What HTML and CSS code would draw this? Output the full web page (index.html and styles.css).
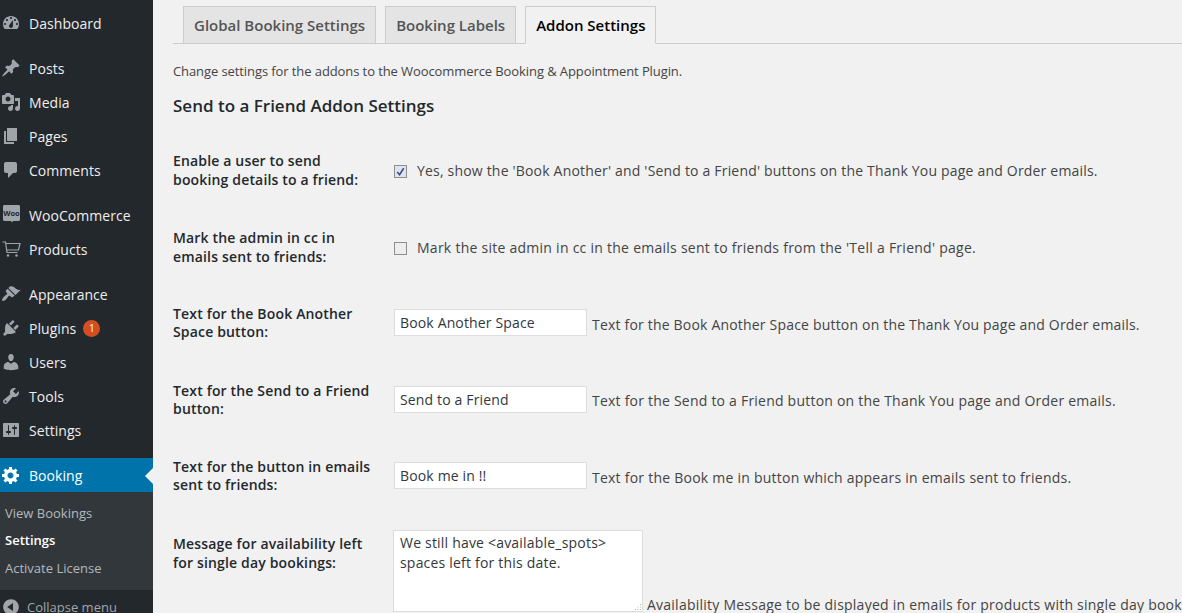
FILE: index.html
```html
<!DOCTYPE html>
<html lang="en">
<head>
<meta charset="utf-8">
<title>Addon Settings</title>
<link rel="stylesheet" href="styles.css">
</head>
<body>
<div class="page">
<nav class="sidebar">
  <ul class="menu">
    <li class="item"><svg class="ico" viewBox="0 0 20 20"><path fill-rule="evenodd" d="M3.76 16h12.48c1.1-1.37 1.76-3.11 1.76-5 0-4.42-3.58-8-8-8s-8 3.58-8 8c0 1.89.66 3.63 1.76 5zM10 4c.55 0 1 .45 1 1s-.45 1-1 1-1-.45-1-1 .45-1 1-1zM6 6c.55 0 1 .45 1 1s-.45 1-1 1-1-.45-1-1 .45-1 1-1zm8 0c.55 0 1 .45 1 1s-.45 1-1 1-1-.45-1-1 .45-1 1-1zm-5.37 5.55L12 7v6c0 1.1-.9 2-2 2s-2-.9-2-2c0-.57.24-1.08.63-1.45zM4 10c.55 0 1 .45 1 1s-.45 1-1 1-1-.45-1-1 .45-1 1-1zm12 0c.55 0 1 .45 1 1s-.45 1-1 1-1-.45-1-1 .45-1 1-1z"/></svg>Dashboard</li>
    <li class="item sep"><svg class="ico" viewBox="0 0 20 20"><path d="M10.44 3.02l1.82-1.82 6.36 6.35-1.83 1.82c-1.05-.68-2.48-.57-3.41.36l-.75.75c-.92.93-1.04 2.35-.35 3.41l-1.83 1.82-2.41-2.41-2.8 2.79c-.42.42-3.38 2.71-3.8 2.29s1.86-3.39 2.28-3.81l2.79-2.79L4.1 9.36l1.83-1.82c1.05.69 2.48.57 3.4-.36l.75-.75c.93-.92 1.05-2.35.36-3.41z"/></svg>Posts</li>
    <li class="item"><svg class="ico" viewBox="0 0 20 20"><path fill-rule="evenodd" d="M13 11V4c0-.55-.45-1-1-1h-1.67L9 1H5L3.67 3H2c-.55 0-1 .45-1 1v7c0 .55.45 1 1 1h10c.55 0 1-.45 1-1zM7 4.5c1.38 0 2.5 1.12 2.5 2.5S8.38 9.5 7 9.5 4.5 8.38 4.5 7 5.62 4.5 7 4.5zM14 6h5v10.5c0 1.38-1.12 2.5-2.5 2.5S14 17.88 14 16.5s1.12-2.5 2.5-2.5c.17 0 .34.02.5.05V9h-3V6zm-4 8.05V13h2v3.5c0 1.38-1.12 2.5-2.5 2.5S7 17.88 7 16.5 8.12 14 9.5 14c.17 0 .34.02.5.05z"/></svg>Media</li>
    <li class="item"><svg class="ico" viewBox="0 0 20 20"><path d="M6 15V2h10v13H6zm-1 1h8v2H3V5h2v11z"/></svg>Pages</li>
    <li class="item"><svg class="ico" viewBox="0 0 20 20"><path d="M5 2h9c1.1 0 2 .9 2 2v7c0 1.1-.9 2-2 2h-2l-5 5v-5H5c-1.1 0-2-.9-2-2V4c0-1.1.9-2 2-2z"/></svg>Comments</li>
    <li class="item sep"><svg class="ico" viewBox="0 0 20 20"><path d="M3.500 0h14c.9 0 1.500.7 1.500 1.500v13c0 .8-.6 1.500-1.500 1.500H12l-1 1.500L10 16H3.500C2.600 16 2 15.300 2 14.500v-13C2 .7 2.600 0 3.500 0z"/><text class="woo" x="10.500" y="10.500">Woo</text></svg>WooCommerce</li>
    <li class="item"><svg class="ico cart" viewBox="0 0 20 20"><path d="M1.500 3h3l1.500 10.500h10.500M5 4.500h14l-1.500 6.500H6"/><circle cx="7" cy="16.500" r="1.200"/><circle cx="15.500" cy="16.500" r="1.200"/></svg>Products</li>
    <li class="item sep"><svg class="ico" viewBox="0 0 20 20"><path d="M14.48 11.06L7.41 3.99l1.5-1.5c.5-.56 2.3-.47 3.51.32 1.21.8 1.43 1.28 2.91 2.1 1.18.64 2.45 1.26 4.45.85zm-.71.71L6.7 4.7 4.93 6.47c-.39.39-.39 1.02 0 1.41l1.06 1.06c.39.39.39 1.03 0 1.42-.6.6-1.43 1.11-2.21 1.69-.35.26-.7.53-1.01.84-1.43 1.43-2.06 3.1-1.4 3.75.65.66 2.32.03 3.75-1.4.31-.31.58-.66.84-1.01.58-.78 1.09-1.61 1.69-2.21.39-.39 1.03-.39 1.42 0l1.06 1.06c.39.39 1.02.39 1.41 0z"/></svg>Appearance</li>
    <li class="item"><svg class="ico" viewBox="0 0 20 20"><path d="M13.11 4.360L9.870 7.600 8 5.730l3.240-3.240c.35-.34 1.050-.2 1.560.32.52.51.66 1.210.31 1.550zm-8 1.770l.91-1.120 9.010 9.010-1.190.84c-.71.71-2.630 1.160-3.820 1.160H6.140L4.900 17.260c-.59.59-1.540.59-2.120 0-.59-.58-.59-1.530 0-2.120l1.240-1.240v-3.880c0-1.130.4-3.190 1.090-3.890zm7.260 3.970l3.240-3.240c.34-.35 1.040-.21 1.550.31.52.51.66 1.210.31 1.550l-3.240 3.250z"/></svg>Plugins<span class="badge">1</span></li>
    <li class="item"><svg class="ico" viewBox="0 0 20 20"><path d="M10 9.250c-2.270 0-2.730-3.440-2.730-3.440C7 4.020 7.820 2 9.970 2c2.160 0 2.980 2.020 2.710 3.810 0 0-.41 3.440-2.680 3.440zm0 2.570L12.720 10c2.390 0 4.520 2.330 4.520 4.530v2.490s-3.650 1.130-7.240 1.130c-3.650 0-7.240-1.130-7.240-1.130v-2.490c0-2.250 1.940-4.480 4.470-4.480z"/></svg>Users</li>
    <li class="item"><svg class="ico" viewBox="0 0 20 20"><path fill-rule="evenodd" d="M16.680 9.770c-1.340 1.340-3.300 1.670-4.950.99l-5.410 6.520c-.99.99-2.590.99-3.580 0s-.99-2.590 0-3.570l6.520-5.420c-.68-1.650-.35-3.610.99-4.950 1.280-1.280 3.120-1.620 4.720-1.060l-2.890 2.890 2.820 2.820 2.860-2.870c.53 1.580.18 3.390-1.080 4.650zM3.810 16.210c.4.39 1.040.39 1.430 0 .4-.4.4-1.040 0-1.430-.39-.4-1.030-.4-1.430 0-.39.39-.39 1.030 0 1.430z"/></svg>Tools</li>
    <li class="item"><svg class="ico" viewBox="0 0 20 20"><path fill-rule="evenodd" d="M18 16V4c0-.55-.45-1-1-1H3c-.55 0-1 .45-1 1v12c0 .55.45 1 1 1h14c.55 0 1-.45 1-1zM8 11h1c.55 0 1 .45 1 1s-.45 1-1 1H8v1.500c0 .28-.22.5-.5.5s-.5-.22-.5-.5V13H6c-.55 0-1-.45-1-1s.45-1 1-1h1V5.500c0-.28.22-.5.5-.5s.5.22.5.5V11zm5-2h-1c-.55 0-1-.45-1-1s.45-1 1-1h1V5.500c0-.28.22-.5.5-.5s.5.22.5.5V7h1c.55 0 1 .45 1 1s-.45 1-1 1h-1v5.500c0 .28-.22.5-.5.5s-.5-.22-.5-.5V9z"/></svg>Settings</li>
    <li class="item sep current"><svg class="ico" viewBox="0 0 20 20"><path fill-rule="evenodd" d="M18 12h-2.180c-.17.7-.44 1.350-.81 1.930l1.540 1.540-2.100 2.100-1.540-1.540c-.58.36-1.230.63-1.910.79V19H8v-2.180c-.68-.16-1.330-.43-1.910-.79l-1.540 1.540-2.120-2.120 1.540-1.540c-.36-.58-.63-1.230-.79-1.910H1V9.030h2.170c.16-.7.44-1.350.8-1.940L2.430 5.550l2.100-2.100 1.540 1.540c.58-.37 1.240-.64 1.930-.81V2h3v2.180c.68.16 1.330.43 1.910.79l1.540-1.540 2.120 2.120-1.540 1.540c.36.59.64 1.240.8 1.940H18V12zm-8.500 1.500c1.660 0 3-1.340 3-3s-1.340-3-3-3-3 1.340-3 3 1.340 3 3 3z"/></svg>Booking</li>
  </ul>
  <ul class="submenu">
    <li>View Bookings</li>
    <li class="active">Settings</li>
    <li>Activate License</li>
  </ul>
  <div class="collapse"><svg class="ico" viewBox="0 0 20 20"><path fill-rule="evenodd" d="M10 2.160c4.330 0 7.840 3.510 7.840 7.840s-3.510 7.840-7.840 7.840S2.160 14.330 2.160 10 5.710 2.160 10 2.160zm2 11.720V6.120L6.180 9.970z"/></svg>Collapse menu</div>
</nav>
<main class="content">
  <div class="tabs">
    <a class="tab">Global Booking Settings</a>
    <a class="tab">Booking Labels</a>
    <a class="tab on">Addon Settings</a>
  </div>
  <p class="intro">Change settings for the addons to the Woocommerce Booking &amp; Appointment Plugin.</p>
  <h2 class="title">Send to a Friend Addon Settings</h2>
  <div class="rows">
    <div class="row gap17 checkrow">
      <label class="lbl">Enable a user to send booking details to a friend:</label>
      <div class="field"><span class="check on"><svg viewBox="0 0 12 12"><path d="M2.500 6.500l2.500 3 4.500-7"/></svg></span><span class="desc">Yes, show the 'Book Another' and 'Send to a Friend' buttons on the Thank You page and Order emails.</span></div>
    </div>
    <div class="row gap14 checkrow">
      <label class="lbl">Mark the admin in cc in emails sent to friends:</label>
      <div class="field"><span class="check"></span><span class="desc wide">Mark the site admin in cc in the emails sent to friends from the 'Tell a Friend' page.</span></div>
    </div>
    <div class="row gap17">
      <label class="lbl">Text for the Book Another Space button:</label>
      <div class="field"><input class="input" type="text" value="Book Another Space"><span class="hint">Text for the Book Another Space button on the Thank You page and Order emails.</span></div>
    </div>
    <div class="row">
      <label class="lbl">Text for the Send to a Friend button:</label>
      <div class="field"><input class="input" type="text" value="Send to a Friend"><span class="hint tight">Text for the Send to a Friend button on the Thank You page and Order emails.</span></div>
    </div>
    <div class="row">
      <label class="lbl">Text for the button in emails sent to friends:</label>
      <div class="field"><input class="input" type="text" value="Book me in !!"><span class="hint wide">Text for the Book me in button which appears in emails sent to friends.</span></div>
    </div>
    <div class="row tall">
      <label class="lbl">Message for availability left for single day bookings:</label>
      <div class="field end"><span class="areawrap"><textarea class="area">We still have &lt;available_spots&gt; spaces left for this date.</textarea><svg class="grip" viewBox="0 0 8 8"><path d="M6 1h1v1H6zM3.500 3.500h1v1h-1zM6 3.500h1v1H6zM1 6h1v1H1zM3.500 6h1v1h-1zM6 6h1v1H6z"/></svg></span><span class="hint wide">Availability Message to be displayed in emails for products with single day bookings.</span></div>
    </div>
  </div>
</main>
</div>
</body>
</html>
```
FILE: styles.css
```css
* { box-sizing: border-box; }
html, body { margin: 0; height: 613px; overflow: hidden; background: #f1f1f1; }
body { font-family: "Open Sans", sans-serif; font-size: 14px; color: #444; }
ul { list-style: none; margin: 0; padding: 0; }
.page { display: flex; height: 613px; overflow: hidden; }
.sidebar { width: 153px; flex: none; background: #23282d; padding-top: 6px; display: flex; flex-direction: column; height: 613px; overflow: hidden; color: #eee; }
.menu, .submenu, .collapse { flex: none; }
.item { height: 34px; display: flex; align-items: center; padding-left: 1px; font-size: 14px; letter-spacing: .05px; color: #eee; position: relative; }
.item.sep { margin-top: 11px; }
.ico { width: 20px; height: 20px; flex: none; margin-right: 8px; fill: #a0a5aa; }
.woo { font: 700 7.500px "Open Sans", sans-serif; fill: #23282d; text-anchor: middle; letter-spacing: 0; }
.cart { fill: none; stroke: #a0a5aa; stroke-width: 1.200; }
.cart circle { fill: #a0a5aa; stroke: none; }
.badge { width: 17px; height: 17px; border-radius: 50%; background: #d54e21; color: #fff; font-size: 10px; display: flex; align-items: center; justify-content: center; margin-left: 7px; letter-spacing: 0; }
.current { background: #0073aa; color: #fff; }
.current .ico { fill: #fff; }
.current::after { content: ""; position: absolute; right: 0; top: 10px; border: 8px solid transparent; border-right-color: #f1f1f1; border-left-width: 0; }
.submenu { background: #32373c; padding: 7px 0 8px; height: 98px; }
.submenu li { height: 27.500px; padding-left: 5px; font-size: 13px; color: #b4b9be; display: flex; align-items: center; }
.submenu .active { color: #fff; font-weight: 600; }
.collapse { display: flex; align-items: center; height: 34px; padding-left: 1px; background: #23282d; font-size: 13px; color: #a0a5aa; }
.collapse .ico { margin-right: 6px; }
.content { flex: 1; min-width: 0; padding: 6px 0 0 20px; }
.tabs { display: flex; gap: 9px; height: 38px; padding-left: 10px; border-bottom: 1px solid #ccc; }
.tab { height: 38px; padding: 6px 10px; border: 1px solid #ccc; background: #e4e4e4; color: #555; font-size: 15px; font-weight: 600; line-height: 24px; white-space: nowrap; }
.tab.on { background: #f1f1f1; border-bottom-color: #f1f1f1; color: #000; }
.intro { margin: 19px 0 0; font-size: 13px; line-height: 17px; letter-spacing: -.09px; color: #444; }
.title { margin: 14px 0 0; font-size: 17px; font-weight: 600; line-height: 24px; color: #23282d; }
.rows { margin-top: 23px; }
.row { display: flex; align-items: center; height: 60px; margin-bottom: 16px; }
.gap17 { margin-bottom: 17px; }
.gap14 { margin-bottom: 14.500px; }
.lbl { width: 221px; flex: none; margin: 0; padding-right: 21px; font-weight: 600; font-size: 14px; line-height: 18px; letter-spacing: .16px; color: #23282d; }
.checkrow .lbl { line-height: 19px; margin-bottom: 2px; }
.field { display: flex; align-items: center; white-space: nowrap; min-width: 0; letter-spacing: .19px; }
.check { width: 13px; height: 13px; margin-right: 10px; border: 1px solid #8e8e8e; background: #ededed; flex: none; display: flex; }
.check.on { background: #dfe4f0; }
.check svg { width: 11px; height: 11px; fill: none; stroke: #3d4f8f; stroke-width: 1.800; }
.input { width: 193px; height: 27px; padding: 3px 5px; border: 1px solid #ddd; background: #fff; font: 14px "Open Sans", sans-serif; letter-spacing: .15px; color: #32373c; margin-right: 5px; flex: none; outline: none; }
.hint { color: #444; padding-top: 4px; }
.hint.tight { padding-top: 2px; letter-spacing: .22px; }
.hint.wide, .desc.wide { letter-spacing: .24px; }
.desc { color: #444; margin-bottom: 2px; }
.desc.wide { letter-spacing: .26px; }
.tall { align-items: flex-start; height: 92px; margin: 0; padding-top: 8.500px; }
.tall .lbl { padding-top: 4px; line-height: 19px; }
.end { align-items: flex-end; margin-left: -1px; }
.end .hint { padding-top: 0; margin-bottom: -2px; }
.areawrap { position: relative; display: block; width: 250px; height: 82px; margin-right: 4px; flex: none; }
.area { display: block; width: 250px; height: 82px; padding: 2px 6px; border: 1px solid #ddd; background: #fff; font: 14px/20px "Open Sans", sans-serif; letter-spacing: .2px; color: #32373c; margin: 0; outline: none; resize: none; overflow: hidden; }
.grip { position: absolute; right: 1px; bottom: 1px; width: 8px; height: 8px; fill: #b5b5b5; }
```
